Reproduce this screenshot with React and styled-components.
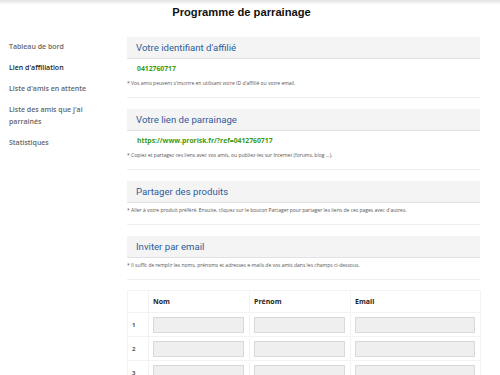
import React from "react";
import styled, { createGlobalStyle } from "styled-components";

const Global = createGlobalStyle`
  html, body { margin: 0; padding: 0; background: #fff; }
  body { font-family: "Open Sans", "Liberation Sans", sans-serif; color: #333; }
  * { box-sizing: border-box; }
`;

const Shade = styled.div`
  height: 5px;
  background: linear-gradient(#e2e2e2, #fff);
`;

const Title = styled.h1`
  margin: 0;
  padding-right: 17px;
  font-family: "Liberation Sans", Arial, sans-serif;
  font-size: 11.2px;
  line-height: 14px;
  font-weight: 700;
  color: #111;
  text-align: center;
`;

const Layout = styled.div`
  display: flex;
  margin-top: 18px;
`;

const Sidebar = styled.nav`
  width: 127px;
  flex: none;
  padding: 4px 0 0 9px;
`;

const NavItem = styled.div`
  width: 90px;
  font-size: 7px;
  line-height: 12px;
  font-weight: 600;
  color: ${(p) => (p.$active ? "#1d1d1d" : "#666")};
  margin-bottom: 9px;
`;

const Main = styled.main`
  width: 353px;
  flex: none;
`;

const Card = styled.section`
  border-bottom: 1px solid #efefef;
  margin-bottom: 11px;
`;

const CardHeader = styled.h2`
  margin: 0;
  height: 22px;
  background: #f4f4f4;
  border-bottom: 1px solid #e2e2e2;
  padding-left: 9px;
  font-family: Roboto, "Open Sans", sans-serif;
  font-size: 9.6px;
  line-height: 21px;
  font-weight: 400;
  color: #2e5c9c;
`;

const CardBody = styled.div`
  padding: 3px 0 9px;
`;

const Code = styled.div`
  margin: 2px 0 5px 10px;
  font-size: 6.8px;
  line-height: 10px;
  font-weight: 700;
  color: #3a9a12;
`;

const Note = styled.p`
  margin: 0;
  font-size: 5px;
  line-height: 9px;
  color: #555;
`;

const Table = styled.table`
  width: 353px;
  margin-top: -1px;
  border-collapse: collapse;
  table-layout: fixed;
`;

const Th = styled.th`
  height: 22px;
  border: 1px solid #f3f3f3;
  padding: 0 4px;
  text-align: left;
  font-size: 7px;
  font-weight: 700;
  color: #1d1d1d;
`;

const Td = styled.td`
  height: 24px;
  border: 1px solid #f3f3f3;
  padding: 0 5px 0 4px;
  font-size: 6px;
  font-weight: 700;
  color: #555;
  vertical-align: middle;
`;

const Field = styled.input`
  display: block;
  width: 100%;
  height: 16px;
  background: #efefef;
  border: 1px solid #d9d9d9;
  border-radius: 0;
  padding: 0;
  margin: 0;
`;

const navItems = [
  "Tableau de bord",
  "Lien d'affiliation",
  "Liste d'amis en attente",
  "Liste des amis que j'ai parrainés",
  "Statistiques",
];

export default function App() {
  return (
    <>
      <Global />
      <Shade />
      <Title>Programme de parrainage</Title>
      <Layout>
        <Sidebar>
          {navItems.map((n, i) => (
            <NavItem key={n} $active={i === 1}>
              {n}
            </NavItem>
          ))}
        </Sidebar>
        <Main>
          <Card>
            <CardHeader>Votre identifiant d'affilié</CardHeader>
            <CardBody>
              <Code>0412760717</Code>
              <Note>* Vos amis peuvent s'inscrire en utilisant votre ID d'affilié ou votre email.</Note>
            </CardBody>
          </Card>
          <Card>
            <CardHeader>Votre lien de parrainage</CardHeader>
            <CardBody>
              <Code>https://www.prorisk.fr/?ref=0412760717</Code>
              <Note>* Copiez et partagez ces liens avec vos amis, ou publiez-les sur Internet (forums, blog ...).</Note>
            </CardBody>
          </Card>
          <Card>
            <CardHeader>Partager des produits</CardHeader>
            <CardBody>
              <Note>* Aller à votre produit préféré. Ensuite, cliquez sur le bouton Partager pour partager les liens de ces pages avec d'autres.</Note>
            </CardBody>
          </Card>
          <Card>
            <CardHeader>Inviter par email</CardHeader>
            <CardBody>
              <Note>* Il suffit de remplir les noms, prénoms et adresses e-mails de vos amis dans les champs ci-dessous.</Note>
            </CardBody>
          </Card>
          <Table>
            <colgroup>
              <col style={{ width: 21 }} />
              <col style={{ width: 101 }} />
              <col style={{ width: 101 }} />
              <col style={{ width: 130 }} />
            </colgroup>
            <thead>
              <tr>
                <Th />
                <Th>Nom</Th>
                <Th>Prénom</Th>
                <Th>Email</Th>
              </tr>
            </thead>
            <tbody>
              {[1, 2, 3].map((n) => (
                <tr key={n}>
                  <Td>{n}</Td>
                  <Td><Field /></Td>
                  <Td><Field /></Td>
                  <Td><Field /></Td>
                </tr>
              ))}
            </tbody>
          </Table>
        </Main>
      </Layout>
    </>
  );
}
